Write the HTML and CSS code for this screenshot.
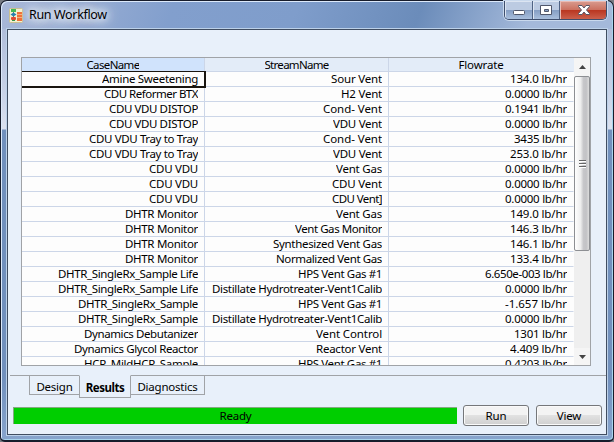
FILE: index.html
```html
<!DOCTYPE html>
<html lang="en"><head><meta charset="utf-8"><title>Run Workflow</title><link rel="stylesheet" href="styles.css"></head>
<body>
<div class="window">
  <header class="titlebar">
    <svg class="appicon" width="14" height="15" viewBox="0 0 14 15"><rect x=".5" y=".5" width="13" height="14" rx="1" fill="#f4f0cf" stroke="#c9bf91"/><path d="M4.500 2v11" stroke="#527b83"/><rect x="2" y="1" width="5" height="3" fill="#44b954"/><path d="M1.500 6.500 4.500 4.500 7.500 6.500 4.500 8.500z" fill="#287fae"/><rect x="2" y="9" width="5" height="3" rx="1" fill="#df4933"/><path d="M8 4h5v2.500H8zM8 7h5v2.500H8zM8 10h5v3H8z" fill="#f06c32"/><path d="M3 12h3v1H3z" fill="#37974b"/></svg>
    <h1>Run Workflow</h1>
    <div class="controls">
      <span class="ctl min"><svg width="27" height="18"><rect x="8.5" y="9.5" width="11" height="4" rx="1" fill="#fff" stroke="#50576b"/></svg></span>
      <span class="ctl max"><svg width="27" height="18"><path fill-rule="evenodd" d="M7.5 4.5h11v9h-11zM11.5 8.5v2h4v-2z" fill="#fff" stroke="#50576b"/></svg></span>
      <span class="ctl close"><svg width="46" height="18"><path d="M18.500 4.500h3.500l2 2.500 2-2.500h3.500v1l-3 3.500 3 3.500v1H26l-2-2.500-2 2.500h-3.500v-1l3-3.500-3-3.500z" fill="#fff" stroke="#555565"/></svg></span>
    </div>
  </header>
  <main class="client">
    <div class="gridbox">
      <div class="table" id="table"></div>
      <div class="scroll">
        <div class="arrow"><svg width="7" height="4"><path d="M0 4 3.500 0 7 4z" fill="#444"/></svg></div>
        <div class="thumb"><i></i><i></i><i></i></div>
        <div class="track"></div>
        <div class="arrow down"><svg width="7" height="4"><path d="M0 0h7L3.500 4z" fill="#444"/></svg></div>
      </div>
    </div>
    <nav class="tabs"><span class="lead"></span><span class="tab design">Design</span><span class="tab active">Results</span><span class="tab diag">Diagnostics</span><span class="rest"></span></nav>
    <footer class="actions"><div class="status">Ready</div><button>Run</button><button class="view">View</button></footer>
  </main>
</div>
<script src="grid.js"></script>
</body></html>
```
FILE: styles.css
```css
*{box-sizing:border-box}
body{margin:0;width:614px;height:442px;overflow:hidden;background:#777b83;font:11.5px/14px "Noto Sans","Open Sans",sans-serif;color:#000}
.window{width:614px;height:442px;border:1px solid #171c2b;border-bottom-width:2px;border-radius:7px 7px 5px 5px;padding:0 6px 5px;display:flex;flex-direction:column;box-shadow:inset 1px 1px #dce9fa,inset -1px -1px #a8d5ed;background:linear-gradient(110deg,#a9b8d8 0,#829fcd 28%,#7f9dcb 48%,#6b8cba 68%,#a4b9da 86%,#a4b9da) 0 0/100% 28px no-repeat,linear-gradient(#a5b4d4 0,#ccd6ea 100px,#dbe1ef 128px,#7190bd 129px,#7190bd 375px,#87a4cd)}
.titlebar{height:28px;flex:none;display:flex;align-items:flex-start}
.appicon{margin:7px 0 0 2px}
h1{font:12.5px/18px "Noto Sans","Open Sans",sans-serif;margin:5px 0 0 6px;white-space:nowrap;letter-spacing:-.35px;text-shadow:0 0 8px #fff,0 0 8px #fff,0 0 14px #e4edff,0 0 18px #e4edff}
.controls{margin-left:auto;margin-right:0;display:flex;height:19px;border:1px solid #3e4e6d;border-top:0;border-radius:0 0 5px 5px;overflow:hidden;box-shadow:0 0 0 1px #c9d9ed}
.ctl{width:27px;height:18px;border-right:1px solid #4f6384;background:linear-gradient(#bccbe2 0 48%,#849dc3 50%,#a9bfdd);box-shadow:inset 1px 1px #dce5f2}
.ctl svg{display:block}
.min{width:28px}
.close{width:46px;border:0;background:linear-gradient(#d99c90 0,#cc7160 48%,#b9351f 50%,#cb604c);box-shadow:inset 1px 1px #eabbb4}
.client{flex:1;border:1px solid #404d61;box-shadow:0 0 0 1px #bcd1e9;background:#e8f0fa;padding:27px 0 0 2px;display:flex;flex-direction:column}
.gridbox{width:570px;height:309px;margin-left:11px;border:1px solid #a0a3a7;display:flex;overflow:hidden;flex:none}
.table{width:552px;overflow:hidden;background:#fff}
.row{display:grid;grid-template-columns:183px 184px 185px;height:15px}
.cell{height:15px;border-right:1px solid #ccd6e8;border-bottom:1px solid #ccd6e8;background:#fdfdfd;text-align:right;padding-right:6px;overflow:hidden;white-space:nowrap;display:flex;justify-content:flex-end;line-height:14px}
.cell span{flex:none;overflow:hidden;height:14px}
.cell:last-child{border-right-color:#fdfdfd}
.head{height:14px}
.head .cell{height:14px;justify-content:center;padding:0;background:#e3ecf8;line-height:13px}
.head .cell:first-child{background:#d0e3fc}
.head .cell:last-child{border-right-color:#e3ecf8}
.selected{position:relative;overflow:visible;z-index:1}
.selected::after{content:"";position:absolute;inset:-1px -2px -2px 0;border:solid #191510;border-width:1px 2px 2px 0}
.scroll{width:16px;display:flex;flex-direction:column;background:#efefef}
.arrow{height:18px;flex:none;display:grid;place-items:center;background:#f5f5f5}
.down{height:17px}
.thumb{height:175px;border:1px solid #8d8f93;border-radius:2px;background:linear-gradient(90deg,#fff,#eee 40%,#c7c7ca 60%,#c2c2c5 80%,#ddd);display:flex;flex-direction:column;align-items:center;justify-content:center;gap:1px}
.thumb i{width:7px;height:2px;background:#666;border-bottom:1px solid #fff}
.track{flex:1}
.tabs{height:23px;margin-top:9px;display:flex;align-items:flex-start;flex:none;line-height:17px}
.lead{width:19px;border-top:1px solid #a0a3a7}
.tab{height:20px;border:1px solid #a0a3a7;text-align:center;padding-top:3px;line-height:16px;white-space:nowrap;letter-spacing:-.22px}
.design{width:50px;border-right:0}
.active{width:52px;height:23px;border-top-color:#e8f0fa;font-weight:700;line-height:17px;letter-spacing:-.5px}
.diag{width:74px;border-left:0}
.rest{flex:1;border-top:1px solid #a0a3a7}
.actions{display:flex;margin:7px 0 0 3px;align-items:flex-start}
.status{width:444px;height:17px;margin:2px 6px 0 0;background:#00ce00;border-top:1px solid #85a981;border-left:1px solid #85a981;text-align:center;line-height:15px;letter-spacing:-.2px}
button{width:66px;height:21px;border:1px solid #75777a;border-radius:3px;box-shadow:inset 0 0 0 1px #fafafa;background:linear-gradient(#f3f3f3 0 45%,#e1e1e1 50%,#cfcfcf);font:11.5px/18px "Noto Sans",sans-serif;letter-spacing:-.2px;padding:0;color:#000}
.view{margin-left:7px}
```
FILE: grid.js
```js
const rows = [
  ["Amine Sweetening", "Sour Vent", "134.0", 96, 51],
  ["CDU Reformer BTX", "H2 Vent", "0.0000", 94, 41],
  ["CDU VDU DISTOP", "Cond- Vent", "0.1941", 89, 59],
  ["CDU VDU DISTOP", "VDU Vent", "0.0000", 89, 49],
  ["CDU VDU Tray to Tray", "Cond- Vent", "3435", 109, 59],
  ["CDU VDU Tray to Tray", "VDU Vent", "253.0", 109, 49],
  ["CDU VDU", "Vent Gas", "0.0000", 49, 46],
  ["CDU VDU", "CDU Vent", "0.0000", 49, 50],
  ["CDU VDU", "CDU Vent]", "0.0000", 49, 50],
  ["DHTR Monitor", "Vent Gas", "149.0", 73, 46],
  ["DHTR Monitor", "Vent Gas Monitor", "146.3", 73, 87],
  ["DHTR Monitor", "Synthesized Vent Gas", "146.1", 73, 109],
  ["DHTR Monitor", "Normalized Vent Gas", "133.4", 73, 106],
  ["DHTR_SingleRx_Sample Life", "HPS Vent Gas #1", "6.650e-003", 140, 84],
  ["DHTR_SingleRx_Sample Life", "Distillate Hydrotreater-Vent1Calib", "0.0000", 140, 170],
  ["DHTR_SingleRx_Sample", "HPS Vent Gas #1", "-1.657", 120, 84],
  ["DHTR_SingleRx_Sample", "Distillate Hydrotreater-Vent1Calib", "0.0000", 120, 170],
  ["Dynamics Debutanizer", "Vent Control", "1301", 114, 66],
  ["Dynamics Glycol Reactor", "Reactor Vent", "4.409", 124, 66],
  ["HCR_MildHCR_Sample", "HPS Vent Gas #1", "0.4203", 114, 84]
];
const flowWidths = {4: 53, 5: 57, 6: 62, 10: 82};
const table = document.getElementById("table");

function addRow(values, widths, header) {
  const row = document.createElement("div");
  row.className = header ? "row head" : "row";
  values.forEach((value, i) => {
    const cell = document.createElement("div");
    const label = document.createElement("span");
    cell.className = "cell";
    label.textContent = value;
    cell.append(label);
    row.append(cell);
    table.append(row);
    const gap = (widths[i] - label.getBoundingClientRect().width) / value.length;
    label.style.letterSpacing = gap.toFixed(3) + "px";
  });
  return row;
}
addRow(["CaseName", "StreamName", "Flowrate"], [53, 64, 45], true);
rows.forEach((r, i) => {
  const flow = r[2] + " lb/hr";
  const row = addRow([r[0], r[1], flow], [r[3], r[4], flowWidths[r[2].length]], false);
  if (i === 0) row.firstChild.classList.add("selected");
});
```
